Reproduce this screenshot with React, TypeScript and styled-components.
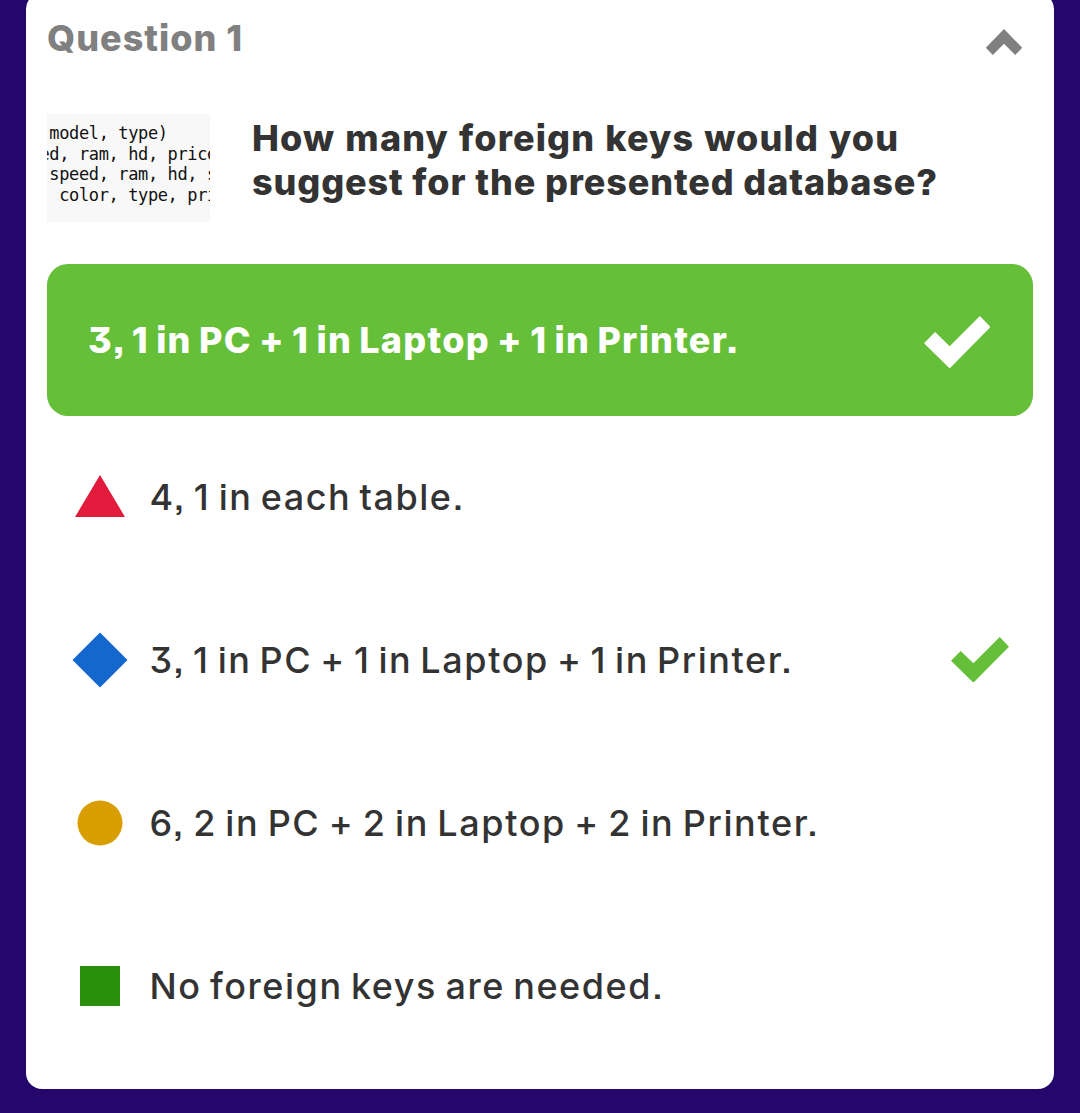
import React from "react";
import styled, { createGlobalStyle } from "styled-components";

const GlobalStyle = createGlobalStyle`
  * { box-sizing: border-box; }
  body {
    margin: 0;
    background: #25076b;
    color: #333333;
    font-family: Inter, "Noto Sans", sans-serif;
    font-feature-settings: "cv09", "ss07", "calt" 0;
  }
`;

const Page = styled.main`
  height: 1113px;
  padding: 0 26px;
  overflow: hidden;
`;

const Card = styled.section`
  height: 1095.5px;
  margin-top: -7px;
  padding: 7px 21px 0;
  border-radius: 16px;
  background: #ffffff;
`;

const Header = styled.header`
  display: flex;
  justify-content: space-between;
  align-items: center;
  height: 76px;
  padding-right: 10px;
`;

const Chevron = styled.svg`
  width: 38px;
  height: 28px;
  margin-top: 8px;
`;

const Label = styled.span<{ $weight: number; $track: number; $word?: number }>`
  font-size: 36px;
  line-height: 44px;
  white-space: nowrap;
  font-weight: ${(p) => p.$weight};
  letter-spacing: ${(p) => p.$track}px;
  word-spacing: ${(p) => p.$word ?? 0}px;
`;

const Title = styled(Label)`
  color: #808080;
`;

const Prompt = styled.div`
  display: flex;
  gap: 42px;
  height: 188px;
  padding-top: 38px;
`;

const Snippet = styled.div`
  display: flex;
  justify-content: center;
  width: 163px;
  height: 108px;
  padding-top: 9px;
  overflow: hidden;
  background: #f8f8f8;
`;

const Code = styled.pre`
  margin: 0;
  width: 178px;
  flex: none;
  color: #111111;
  font: 17px/20.5px "DejaVu Sans Mono", monospace;
  letter-spacing: -0.38px;
`;

const Question = styled.h1`
  display: flex;
  flex-direction: column;
  margin: 0;
  padding-top: 2px;
`;

const Result = styled.div`
  display: flex;
  justify-content: space-between;
  align-items: center;
  height: 152px;
  padding: 0 43px 0 41px;
  border-radius: 21px;
  background: #66bf39;
  color: #ffffff;
`;

const Options = styled.ul`
  margin: -1px 0 0;
  padding: 0;
  list-style: none;
`;

const Option = styled.li`
  display: flex;
  align-items: center;
  height: 163px;
  padding: 0 24px 0 25px;
`;

const Shape = styled.svg`
  flex: none;
  width: 56px;
  height: 56px;
  margin-right: 21.5px;
`;

const Tick = styled.svg<{ $w: number; $drop: number }>`
  width: ${(p) => p.$w}px;
  height: auto;
  margin: ${(p) => p.$drop}px 0 0 auto;
`;

const Check = ({ size, color, drop = 0 }: { size: number; color: string; drop?: number }) => (
  <Tick $w={size} $drop={drop} viewBox="0 0 66 52" fill={color}>
    <path d="M0 27 11 16 25.5 30 55.5 0 66 11 25.5 52z" />
  </Tick>
);

const options = [
  { text: "4, 1 in each table.", track: 1.5, word: -2.7, shape: <path fill="#e21b3c" d="M28 6 53 48H3z" /> },
  {
    text: "3, 1 in PC + 1 in Laptop + 1 in Printer.",
    track: 1.6,
    word: -3.2,
    correct: true,
    shape: <path fill="#1368ce" d="M28 0.5 55.5 28 28 55.5 0.5 28z" />,
  },
  {
    text: "6, 2 in PC + 2 in Laptop + 2 in Printer.",
    track: 1.6,
    word: -2.8,
    shape: <circle fill="#d89e00" cx="28" cy="28" r="22.5" />,
  },
  { text: "No foreign keys are needed.", track: 1.55, word: -2.8, shape: <path fill="#298f0d" d="M8 8H48V48H8z" /> },
];

export default function App() {
  return (
    <>
      <GlobalStyle />
      <Page>
        <Card>
          <Header>
            <Title $weight={800} $track={1}>Question 1</Title>
            <Chevron viewBox="0 0 38 28" fill="#808080">
              <path d="M19 1 37.2 19.7 30.2 27 19 15.8 7.8 27 0.8 19.7z" />
            </Chevron>
          </Header>
          <Prompt>
            <Snippet>
              <Code>{" model, type)\ned, ram, hd, price\n speed, ram, hd, s\n  color, type, pri"}</Code>
            </Snippet>
            <Question>
              <Label $weight={800} $track={1.15} $word={1}>How many foreign keys would you</Label>
              <Label $weight={800} $track={0.87}>suggest for the presented database?</Label>
            </Question>
          </Prompt>
          <Result>
            <Label $weight={800} $track={1.25} $word={-1.9}>3, 1 in PC + 1 in Laptop + 1 in Printer.</Label>
            <Check size={66.5} drop={4} color="#ffffff" />
          </Result>
          <Options>
            {options.map((o) => (
              <Option key={o.text}>
                <Shape viewBox="0 0 56 56">{o.shape}</Shape>
                <Label $weight={500} $track={o.track} $word={o.word}>{o.text}</Label>
                {o.correct && <Check size={58} color="#66bf39" />}
              </Option>
            ))}
          </Options>
        </Card>
      </Page>
    </>
  );
}
